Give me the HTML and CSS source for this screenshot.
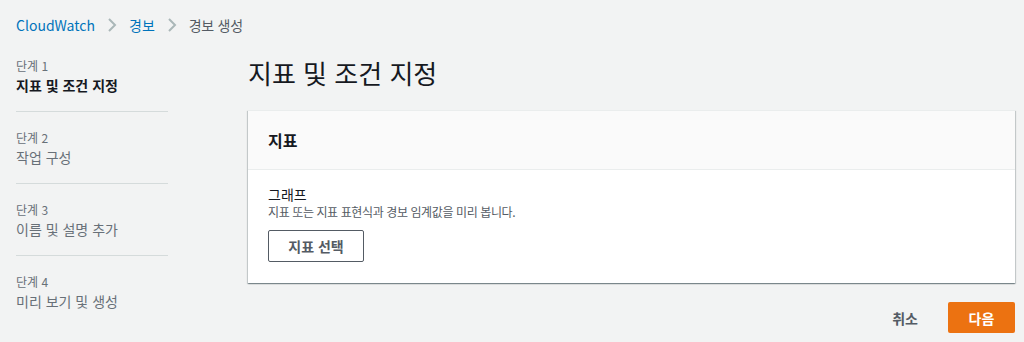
FILE: index.html
```html
<!DOCTYPE html>
<html lang="ko">
<head>
<meta charset="utf-8">
<link rel="stylesheet" href="styles.css">
</head>
<body>
<nav class="breadcrumb">
  <a class="crumb-link">CloudWatch</a>
  <svg class="chev" viewBox="0 0 10 16" width="10" height="16"><path d="M2 2l6 6-6 6" fill="none" stroke="#aab7b8" stroke-width="2"/></svg>
  <a class="crumb-link">경보</a>
  <svg class="chev" viewBox="0 0 10 16" width="10" height="16"><path d="M2 2l6 6-6 6" fill="none" stroke="#aab7b8" stroke-width="2"/></svg>
  <span class="crumb-current">경보 생성</span>
</nav>
<div class="layout">
  <ul class="steps">
    <li class="step active"><div class="step-num">단계 1</div><div class="step-title">지표 및 조건 지정</div></li>
    <li class="step"><div class="step-num">단계 2</div><div class="step-title">작업 구성</div></li>
    <li class="step"><div class="step-num">단계 3</div><div class="step-title">이름 및 설명 추가</div></li>
    <li class="step"><div class="step-num">단계 4</div><div class="step-title">미리 보기 및 생성</div></li>
  </ul>
  <main class="main">
    <h1 class="page-title">지표 및 조건 지정</h1>
    <section class="card">
      <header class="card-header"><h2>지표</h2></header>
      <div class="card-body">
        <div class="field-label">그래프</div>
        <div class="field-desc">지표 또는 지표 표현식과 경보 임계값을 미리 봅니다.</div>
        <button class="btn">지표 선택</button>
      </div>
    </section>
    <div class="actions">
      <button class="btn-link">취소</button>
      <button class="btn-primary">다음</button>
    </div>
  </main>
</div>
</body>
</html>
```
FILE: styles.css
```css
* { box-sizing: border-box; }
html, body { margin: 0; }
body {
  background: #f2f3f3;
  font-family: "Noto Sans CJK KR", "Noto Sans", sans-serif;
  font-size: 14px;
  color: #16191f;
  height: 342px;
  overflow: hidden;
}
.breadcrumb {
  display: flex;
  align-items: center;
  gap: 12px;
  padding: 13px 16px 0;
  height: 36px;
  line-height: 22px;
}
.crumb-link { color: #0073bb; }
.crumb-current { color: #545b64; letter-spacing: -0.3px; }
.chev { display: block; }
.layout {
  display: flex;
  padding-left: 16px;
}
.steps {
  list-style: none;
  margin: 19px 0 0;
  padding: 0;
  width: 152px;
  flex: none;
}
.step {
  border-bottom: 1px solid #d5dbdb;
  padding: 3px 0 16px;
  margin-bottom: 15px;
}
.step:last-child { border-bottom: none; }
.step-num {
  font-size: 12px;
  line-height: 16px;
  height: 16px;
  color: #687078;
  margin-bottom: 1px;
}
.step-title {
  font-size: 14px;
  line-height: 20px;
  height: 20px;
  color: #687078;
}
.active .step-title { color: #16191f; font-weight: 700; }
.main {
  margin-left: 80px;
  width: 767px;
  flex: none;
}
.page-title {
  margin: 19px 0 0;
  font-size: 26px;
  font-weight: 400;
  line-height: 36px;
  height: 38px;
}
.card {
  margin-top: 17px;
  background: #fff;
  box-shadow: 0 1px 1px 0 rgba(0,28,36,.3), 1px 1px 1px 0 rgba(0,28,36,.15), -1px 1px 1px 0 rgba(0,28,36,.15);
  border-top: 1px solid #eaeded;
}
.card-header {
  background: #fafafa;
  border-bottom: 1px solid #eaeded;
  height: 59px;
  padding: 0 20px;
  display: flex;
  align-items: center;
}
.card-header h2 {
  margin: 0;
  font-size: 16px;
  font-weight: 700;
  line-height: 22px;
}
.card-body {
  padding: 14px 20px 21px;
}
.field-label {
  font-size: 14px;
  line-height: 20px;
  height: 20px;
}
.field-desc {
  font-size: 12px;
  line-height: 16px;
  height: 16px;
  color: #545b64;
  letter-spacing: -0.4px;
}
.btn {
  display: block;
  margin-top: 10px;
  height: 32px;
  padding: 0;
  border: 1px solid #545b64;
  border-radius: 2px;
  background: #fff;
  font: 700 14px "Noto Sans CJK KR", "Noto Sans", sans-serif;
  color: #545b64;
  width: 96px;
  white-space: nowrap;
}
.actions {
  display: flex;
  justify-content: flex-end;
  align-items: center;
  gap: 30px;
  margin-top: 19px;
}
.btn-link {
  border: none;
  background: none;
  font: 700 14px "Noto Sans CJK KR", "Noto Sans", sans-serif;
  color: #545b64;
  padding: 0;
  height: 31px;
}
.btn-primary {
  border: none;
  background: #ec7211;
  color: #fff;
  border-radius: 2px;
  font: 700 14px "Noto Sans CJK KR", "Noto Sans", sans-serif;
  width: 67px;
  height: 31px;
}
```
